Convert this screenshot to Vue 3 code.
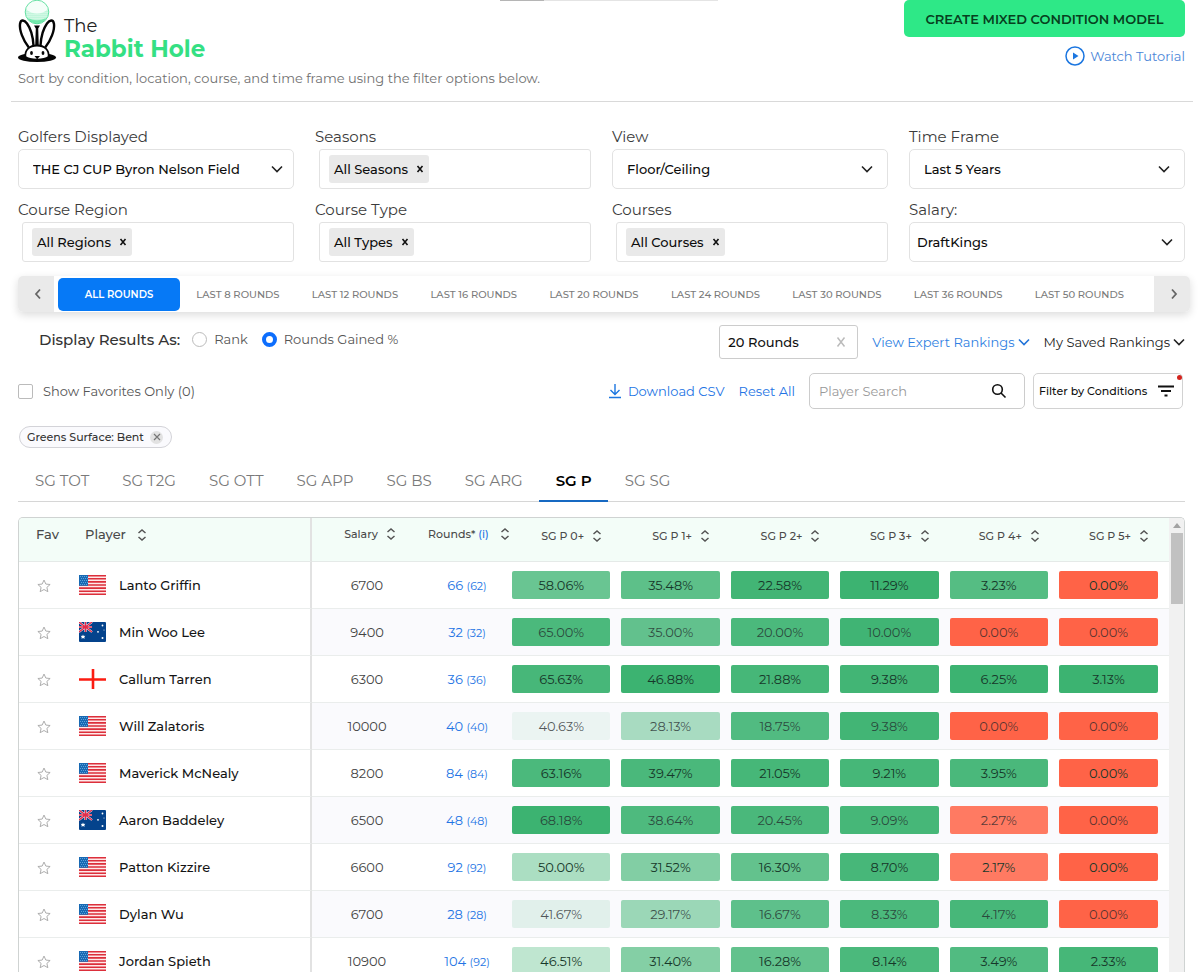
<script setup>
import { ref } from 'vue'

const roundTabs = ['All Rounds', 'Last 8 Rounds', 'Last 12 Rounds', 'Last 16 Rounds', 'Last 20 Rounds', 'Last 24 Rounds', 'Last 30 Rounds', 'Last 36 Rounds', 'Last 50 Rounds']
const statTabs = ['SG TOT', 'SG T2G', 'SG OTT', 'SG APP', 'SG BS', 'SG ARG', 'SG P', 'SG SG']
const activeRound = ref('All Rounds')
const activeStat = ref('SG P')
const displayAs = ref('gained')
const favoritesOnly = ref(false)
const search = ref('')

const filters = [
  { id: 'golfers', label: 'Golfers Displayed', type: 'select', value: 'THE CJ CUP Byron Nelson Field', tight: true },
  { id: 'seasons', label: 'Seasons', type: 'tags', value: 'All Seasons' },
  { id: 'view', label: 'View', type: 'select', value: 'Floor/Ceiling' },
  { id: 'time', label: 'Time Frame', type: 'select', value: 'Last 5 Years' },
  { id: 'region', label: 'Course Region', type: 'tags', value: 'All Regions' },
  { id: 'type', label: 'Course Type', type: 'tags', value: 'All Types' },
  { id: 'courses', label: 'Courses', type: 'tags', value: 'All Courses' },
  { id: 'salary', label: 'Salary:', type: 'select', value: 'DraftKings', snug: true },
]

const statColumns = ['SG P 0+', 'SG P 1+', 'SG P 2+', 'SG P 3+', 'SG P 4+', 'SG P 5+']

const g = (value, strength) => ({ value, color: `rgba(60, 179, 113, ${strength})` })
const r = (value, strength = 1) => ({ value, color: `rgba(255, 99, 71, ${strength})` })

const players = [
  { name: 'Lanto Griffin', flag: 'us', salary: 6700, rounds: 66, counted: 62, stats: [g('58.06', 0.77), g('35.48', 0.83), g('22.58', 0.97), g('11.29', 1), g('3.23', 0.87), r('0.00')] },
  { name: 'Min Woo Lee', flag: 'au', salary: 9400, rounds: 32, counted: 32, stats: [g('65.00', 0.92), g('35.00', 0.8), g('20.00', 0.92), g('10.00', 0.98), r('0.00'), r('0.00')] },
  { name: 'Callum Tarren', flag: 'en', salary: 6300, rounds: 36, counted: 36, stats: [g('65.63', 0.94), g('46.88', 1), g('21.88', 0.95), g('9.38', 0.97), g('6.25', 1), g('3.13', 1)] },
  { name: 'Will Zalatoris', flag: 'us', salary: 10000, rounds: 40, counted: 40, stats: [g('40.63', 0.08), g('28.13', 0.43), g('18.75', 0.89), g('9.38', 0.97), r('0.00'), r('0.00')] },
  { name: 'Maverick McNealy', flag: 'us', salary: 8200, rounds: 84, counted: 84, stats: [g('63.16', 0.92), g('39.47', 0.93), g('21.05', 0.95), g('9.21', 0.95), g('3.95', 0.93), r('0.00')] },
  { name: 'Aaron Baddeley', flag: 'au', salary: 6500, rounds: 48, counted: 48, stats: [g('68.18', 1), g('38.64', 0.91), g('20.45', 0.93), g('9.09', 0.95), r('2.27', 0.85), r('0.00')] },
  { name: 'Patton Kizzire', flag: 'us', salary: 6600, rounds: 92, counted: 92, stats: [g('50.00', 0.43), g('31.52', 0.64), g('16.30', 0.8), g('8.70', 0.94), r('2.17', 0.85), r('0.00')] },
  { name: 'Dylan Wu', flag: 'us', salary: 6700, rounds: 28, counted: 28, stats: [g('41.67', 0.13), g('29.17', 0.5), g('16.67', 0.82), g('8.33', 0.92), g('4.17', 0.94), r('0.00')] },
  { name: 'Jordan Spieth', flag: 'us', salary: 10900, rounds: 104, counted: 92, stats: [g('46.51', 0.33), g('31.40', 0.63), g('16.28', 0.8), g('8.14', 0.92), g('3.49', 0.89), g('2.33', 0.95)] },
]
</script>

<template>
  <div class="page">
    <div class="top-progress"><span></span></div>
    <header class="header">
      <div>
        <div class="brand">
          <svg class="logo" viewBox="0 0 40 64" width="40" height="64" aria-hidden="true">
            <defs>
              <pattern id="dimples" width="2" height="2" patternUnits="userSpaceOnUse">
                <circle cx="1" cy="1" r="0.6" fill="#2fdc84" />
              </pattern>
            </defs>
            <circle cx="19" cy="12" r="11.800" fill="#f4fef9" stroke="#58dc9b" stroke-width="0.900" />
            <path d="M8 9C14 15 24 15 30 9C32 17 27 24 19 24C11 24 6 17 8 9Z" fill="url(#dimples)" />
            <path d="M10 18C16 21 22 21 28 18C25 25 13 25 10 18Z" fill="#2fdc84" opacity="0.55" />
            <ellipse cx="19" cy="57.500" rx="19" ry="4.500" fill="#050505" />
            <path d="M16 25.500H22L20.200 28.500L20.800 46H17.200L17.800 28.500Z" fill="#050505" />
            <path d="M10.500 47C5 40 1.200 30 2 24C2.800 19 6.500 20 9 23.500C13 29 15 37 15.500 45.500M27.500 47C33 40 36.800 30 36 24C35.200 19 31.500 20 29 23.500C25 29 23 37 22.500 45.500" fill="none" stroke="#050505" stroke-width="2.400" stroke-linecap="round" />
            <path d="M7.500 57C6.500 50 11.500 45.500 19 45.500C26.500 45.500 31.500 50 30.500 57C26 60.500 12 60.500 7.500 57Z" fill="#fff" stroke="#050505" stroke-width="1.800" />
            <g fill="#050505">
              <ellipse cx="13.500" cy="53" rx="1.400" ry="2" /><ellipse cx="25" cy="53" rx="1.400" ry="2" />
              <path d="M16.500 56H22L19.800 58.500V60H18.500V58.500Z" />
            </g>
          </svg>
          <h1>The<strong>Rabbit Hole</strong></h1>
        </div>
        <p class="intro">Sort by condition, location, course, and time frame using the filter options below.</p>
      </div>
      <div class="header-actions">
        <button class="primary">CREATE MIXED CONDITION MODEL</button>
        <a class="tutorial" href="#tutorial">
          <svg viewBox="0 0 20 20" width="20" height="20" aria-hidden="true"><circle cx="10" cy="10" r="9" fill="none" stroke="#1b76e0" stroke-width="1.500" /><path d="M8 6.500L13.500 10L8 13.500Z" fill="#1b76e0" /></svg>
          Watch Tutorial
        </a>
      </div>
    </header>

    <section class="filters">
      <div v-for="f in filters" :key="f.id" class="field">
        <label :for="f.id">{{ f.label }}</label>
        <div v-if="f.type === 'select'" class="select-box" :class="{ snug: f.snug, tight: f.tight }">
          <select :id="f.id"><option>{{ f.value }}</option></select>
          <svg viewBox="0 0 12 8" width="12" height="8" aria-hidden="true"><path d="M1 1.500L6 6.500L11 1.500" /></svg>
        </div>
        <div v-else class="tag-box">
          <span class="tag">{{ f.value }}<button :aria-label="`Remove ${f.value}`"><svg viewBox="0 0 8 8" width="8" height="8"><path d="M1.500 1L6.500 7M6.500 1L1.500 7" /></svg></button></span>
          <input :id="f.id" type="text" />
        </div>
      </div>
    </section>

    <nav class="rounds" aria-label="Rounds">
      <button class="arrow" aria-label="Previous"><svg viewBox="0 0 8 12" width="8" height="12"><path d="M6 1.500L2 6L6 10.500" /></svg></button>
      <div class="round-list">
        <button v-for="t in roundTabs" :key="t" class="round" :class="{ active: t === activeRound }" @click="activeRound = t">{{ t.toUpperCase() }}</button>
      </div>
      <button class="arrow next" aria-label="Next"><svg viewBox="0 0 8 12" width="8" height="12"><path d="M2 1.500L6 6L2 10.500" /></svg></button>
    </nav>

    <div class="options">
      <div class="display-as">
        <span class="display-title">Display Results As:</span>
        <label><input v-model="displayAs" type="radio" name="display" value="rank" />Rank</label>
        <label><input v-model="displayAs" type="radio" name="display" value="gained" />Rounds Gained %</label>
      </div>
      <div class="option-right">
        <div class="clearable">
          <input type="text" value="20 Rounds" aria-label="Minimum rounds" />
          <button aria-label="Clear"><svg viewBox="0 0 10 10" width="10" height="10"><path d="M1.500 0.500L8.500 9.500M8.500 0.500L1.500 9.500" /></svg></button>
        </div>
        <button class="menu expert">View Expert Rankings<svg viewBox="0 0 12 8" width="12" height="8"><path d="M1 1.500L6 6.500L11 1.500" /></svg></button>
        <button class="menu">My Saved Rankings<svg viewBox="0 0 12 8" width="12" height="8"><path d="M1 1.500L6 6.500L11 1.500" /></svg></button>
      </div>
    </div>

    <div class="tools">
      <label class="favorites"><input v-model="favoritesOnly" type="checkbox" />Show Favorites Only (0)</label>
      <div class="tool-right">
        <a href="#csv" class="csv"><svg viewBox="0 0 12 16" width="12" height="16"><path d="M6 1V11M1.500 7L6 11.500L10.500 7M0 14.500H12" /></svg>Download CSV</a>
        <a href="#reset" class="reset">Reset All</a>
        <div class="search">
          <input v-model="search" type="text" placeholder="Player Search" aria-label="Player Search" />
          <button aria-label="Search"><svg viewBox="0 0 16 16" width="16" height="16"><circle cx="6.500" cy="6.500" r="4.800" /><path d="M10 10L14.500 14.500" /></svg></button>
        </div>
        <button class="conditions">Filter by Conditions<svg viewBox="0 0 16 12" width="16" height="12"><path d="M0 1.500H16M3 6H13M6.500 10.500H9.500" /></svg><span class="dot"></span></button>
      </div>
    </div>

    <div class="chips">
      <span class="chip">Greens Surface: Bent<button aria-label="Remove Greens Surface: Bent"><svg viewBox="0 0 8 8" width="8" height="8"><path d="M1 1L7 7M7 1L1 7" /></svg></button></span>
    </div>

    <nav class="stats" aria-label="Statistics">
      <button v-for="t in statTabs" :key="t" :class="{ active: t === activeStat }" @click="activeStat = t">{{ t }}</button>
    </nav>

    <section class="grid">
      <div class="table-wrap">
        <table>
          <colgroup>
            <col class="c-fav" /><col class="c-player" /><col class="c-salary" /><col class="c-rounds" />
            <col v-for="n in 5" :key="n" /><col class="c-last" />
          </colgroup>
          <thead>
            <tr>
              <th class="h-fav">Fav</th>
              <th class="h-player">Player<svg class="sort" viewBox="0 0 10 12" width="10" height="12"><path d="M1.500 4L5 1L8.500 4M1.500 8L5 11L8.500 8" /></svg></th>
              <th class="small">Salary<svg class="sort near" viewBox="0 0 10 12" width="10" height="12"><path d="M1.500 4L5 1L8.500 4M1.500 8L5 11L8.500 8" /></svg></th>
              <th class="small">Rounds* <a href="#rounds">(i)</a><svg class="sort" viewBox="0 0 10 12" width="10" height="12"><path d="M1.500 4L5 1L8.500 4M1.500 8L5 11L8.500 8" /></svg></th>
              <th v-for="c in statColumns" :key="c" class="stat-head">{{ c }}<svg class="sort near" viewBox="0 0 10 12" width="10" height="12"><path d="M1.500 4L5 1L8.500 4M1.500 8L5 11L8.500 8" /></svg></th>
            </tr>
          </thead>
          <tbody>
            <tr v-for="p in players" :key="p.name">
              <td class="fav"><button :aria-label="`Favorite ${p.name}`"><svg viewBox="0 0 16 16" width="14" height="14"><path d="M8 1.200L10.100 5.800L15 6.300L11.300 9.600L12.400 14.500L8 12L3.600 14.500L4.700 9.600L1 6.300L5.900 5.800Z" /></svg></button></td>
              <td class="player">
                <div>
                  <svg v-if="p.flag === 'us'" class="flag" viewBox="0 0 27 20" width="27" height="20" aria-label="United States">
                    <rect width="27" height="20" rx="1" fill="#ffe9e9" />
                    <path d="M0 .8H27M0 3.800H27M0 6.900H27M0 10H27M0 13.100H27M0 16.200H27M0 19.200H27" stroke="#dc2f3b" stroke-width="1.600" />
                    <rect width="9" height="10.800" fill="#1769b3" />
                    <path d="M1 1.500H9M2 3.500H9M1 5.500H9M2 7.500H9M1 9.500H9" stroke="#6fb0e4" stroke-width="0.800" stroke-dasharray="1 1" />
                  </svg>
                  <svg v-else-if="p.flag === 'au'" class="flag" viewBox="0 0 27 20" width="27" height="20" aria-label="Australia">
                    <rect width="27" height="20" rx="1" fill="#04438c" />
                    <path d="M0 0L13 10M13 0L0 10M6.500 0V10M0 5H13" stroke="#fff" stroke-width="2.200" />
                    <path d="M0 0L13 10M13 0L0 10M6.500 0V10M0 5H13" stroke="#e02d4b" stroke-width="1.400" />
                    <g fill="#fff"><path d="M4 12.500L4.700 14L6.300 13.800L5.300 15.200L5.700 16.800L4 16L2.500 16.800L2.700 15.200L1.700 13.800L3.300 14Z" /><circle cx="23.500" cy="3.500" r="0.900" /><circle cx="19" cy="9.800" r="0.900" /><circle cx="25" cy="8" r="0.500" /><circle cx="23.500" cy="16" r="1" /></g>
                  </svg>
                  <svg v-else class="flag" viewBox="0 0 27 20" width="27" height="20" aria-label="England"><rect width="27" height="20" fill="#fff" /><path d="M14 0V20M0 10.500H27" stroke="#fb1c12" stroke-width="2.600" /></svg>
                  {{ p.name }}
                </div>
              </td>
              <td class="num">{{ p.salary }}</td>
              <td class="num count"><a href="#player">{{ p.rounds }} <small>({{ p.counted }})</small></a></td>
              <td v-for="(s, i) in p.stats" :key="i" class="stat"><div class="pill" :style="{ background: s.color }">{{ s.value }}%</div></td>
            </tr>
          </tbody>
        </table>
      </div>
      <div class="scrollbar" aria-hidden="true"><svg viewBox="0 0 8 5" width="8" height="5"><path d="M0 5L4 0L8 5Z" fill="#a3a3a3" /></svg><span></span></div>
    </section>
  </div>
</template>

<style>
body { margin: 0; background: #fff; }
</style>

<style scoped>
* { box-sizing: border-box; }
.page {
  height: 100vh;
  overflow: hidden;
  display: flex;
  flex-direction: column;
  padding: 0 15px 0 18px;
  font-family: Montserrat, Inter, "Liberation Sans", sans-serif;
  font-size: 13px;
  color: #333;
}
button, input, select { font-family: inherit; color: inherit; }
button { border: 0; padding: 0; background: none; cursor: pointer; }
a { color: #2374e4; text-decoration: none; }
svg { flex: none; fill: none; stroke: none; }
.top-progress { position: absolute; top: 0; left: 500px; width: 218px; height: 1px; background: #e4e4e4; }
.top-progress span { display: block; width: 20%; height: 1px; background: #b5b5b5; }

.header { display: flex; justify-content: space-between; height: 102px; margin: 0 -8px 0 -7px; padding: 0 8px 0 7px; border-bottom: 1px solid #d9d9d9; flex: none; }
.brand { display: flex; gap: 6px; height: 64px; }
h1 { margin: 0; padding-top: 15px; font-size: 18px; line-height: 23px; font-weight: 400; color: #222; }
h1 strong { display: block; font-size: 23px; font-weight: 700; color: #34e083; }
.intro { margin: 4px 0 0; font-size: 13px; line-height: 20px; color: #707070; }
.header-actions { display: flex; flex-direction: column; align-items: flex-end; gap: 9px; }
.primary { width: 281px; height: 37px; border-radius: 5px; background: #2ee887; font-size: 13px; font-weight: 600; color: #07401e; }
.tutorial { display: flex; align-items: center; gap: 5px; font-size: 13px; line-height: 20px; color: #4a86d8; }

.filters { display: grid; grid-template-columns: repeat(4, minmax(0, 1fr)); gap: 11px 21px; padding-top: 25px; flex: none; }
.field > label { display: block; height: 22px; font-size: 15px; line-height: 20px; color: #3b3b3b; }
.select-box, .tag-box { display: flex; align-items: center; height: 40px; border: 1px solid #e2e2e2; border-radius: 5px; }
.select-box { position: relative; }
.select-box select { flex: 1; width: 100%; height: 100%; padding: 0 14px; border: 0; background: none; appearance: none; font-size: 13px; font-weight: 500; color: #0c0c0c; }
.select-box svg { position: absolute; right: 14px; stroke: #222; stroke-width: 1.6; pointer-events: none; }
.select-box.tight svg { right: 10px; }
.select-box.snug select { padding: 0 7px; }
.select-box.snug svg { right: 11px; }
.tag-box { margin-left: 4px; padding: 0 9px; border-radius: 3px; }
.tag-box input { flex: 1; min-width: 0; border: 0; outline: 0; background: none; }
.tag { display: flex; align-items: center; gap: 8px; height: 28px; padding: 0 5px; border-radius: 3px; background: #e9e9e9; font-size: 13px; font-weight: 500; color: #0c0c0c; }
.tag button { display: flex; }
.tag svg { stroke: #111; stroke-width: 1.6; }

.rounds { display: flex; height: 36px; margin: 14px -5px 0 0; border-radius: 5px; box-shadow: 0 3px 8px rgba(0, 0, 0, 0.14); flex: none; }
.arrow { width: 36px; padding-left: 4px; border-radius: 5px 0 0 5px; background: #eaeaea; display: flex; align-items: center; justify-content: center; }
.arrow.next { border-radius: 0 5px 5px 0; }
.arrow svg { stroke: #666; stroke-width: 1.8; }
.round-list { flex: 1; display: flex; align-items: center; justify-content: space-between; padding: 0 30px 0 4px; }
.round { height: 33px; font-size: 10px; font-weight: 500; color: #7a7a7a; }
.round.active { width: 122px; margin-right: -16px; border-radius: 5px; background: #0679f6; color: #fff; font-weight: 600; }

.options { display: flex; justify-content: space-between; align-items: center; height: 34px; margin-top: 13px; padding-left: 21px; flex: none; }
.display-as { display: flex; align-items: center; height: 28px; margin-bottom: 6px; }
.display-title { margin-right: 12px; font-size: 15px; font-weight: 500; }
.display-as label { display: flex; align-items: center; gap: 7px; margin-right: 14px; color: #555; }
.display-as input { appearance: none; width: 15px; height: 15px; margin: 0; border: 1px solid #bbb; border-radius: 50%; }
.display-as input:checked { border: 4px solid #0d6efd; }
.option-right { display: flex; align-items: center; gap: 14px; }
.clearable { display: flex; align-items: center; width: 139px; height: 34px; padding: 0 11px 0 8px; border: 1px solid #ccc; border-radius: 3px; }
.clearable input { flex: 1; min-width: 0; padding: 0; border: 0; font-size: 13px; font-weight: 500; color: #111; }
.clearable svg { stroke: #bbb; stroke-width: 1.5; display: block; }
.menu { display: flex; align-items: center; gap: 3px; font-size: 13px; color: #222; }
.menu svg { stroke: #222; stroke-width: 1.6; }
.menu.expert { color: #2f7fe2; }
.menu.expert svg { stroke: #2374d9; }

.tools { display: flex; justify-content: space-between; align-items: center; height: 36px; margin-top: 14px; padding-right: 2px; flex: none; }
.favorites { display: flex; align-items: center; gap: 10px; color: #555; }
.favorites input { appearance: none; width: 15px; height: 15px; margin: 0; border: 1px solid #bbb; border-radius: 2px; }
.tool-right { display: flex; align-items: center; }
.csv { display: flex; align-items: center; gap: 7px; }
.csv svg { stroke: #1b76e0; stroke-width: 1.4; }
.reset { margin: 0 14px; }
.search { display: flex; align-items: center; width: 216px; height: 36px; padding: 0 17px 0 9px; border: 1px solid #ccc; border-radius: 5px; }
.search input { flex: 1; min-width: 0; padding: 0; border: 0; outline: 0; font-size: 13px; }
.search input::placeholder { color: #999; opacity: 1; }
.search svg { display: block; stroke: #111; stroke-width: 1.6; }
.conditions { position: relative; display: flex; align-items: center; justify-content: space-between; width: 150px; height: 36px; margin-left: 8px; padding: 0 8px 0 5px; border: 1px solid #d2d2d2; border-radius: 5px; font-size: 11px; font-weight: 500; color: #111; }
.conditions svg { stroke: #111; stroke-width: 1.8; }
.dot { position: absolute; top: 1px; right: 0; width: 5px; height: 5px; border-radius: 50%; background: #d3241e; }

.chips { display: flex; margin: 17px 0 0 1px; flex: none; }
.chip { display: flex; align-items: center; justify-content: space-between; width: 153px; height: 22px; padding: 0 8px 0 7px; border: 1px solid #d3d3d8; border-radius: 11px; background: #fafafd; font-size: 11px; font-weight: 500; }
.chip button { display: flex; align-items: center; justify-content: center; width: 13px; height: 13px; border-radius: 50%; background: #e2e2e2; }
.chip svg { stroke: #777; stroke-width: 1.2; }

.stats { display: flex; height: 42px; margin-top: 12px; border-bottom: 1px solid #d6d6d6; flex: none; }
.stats button { height: 42px; padding: 0 16px 0 17px; border-bottom: 2px solid transparent; font-size: 15px; color: #7a7a7a; }
.stats button.active { border-bottom-color: #1769c2; font-weight: 600; color: #000; }

.grid { display: flex; flex: 1; min-height: 0; margin-top: 15px; border: 1px solid #cfd3d2; border-bottom: 0; border-radius: 5px 5px 0 0; overflow: hidden; }
.table-wrap { flex: 1; min-width: 0; overflow: hidden; }
table { width: 100%; table-layout: fixed; border-collapse: separate; border-spacing: 0; }
.c-fav { width: 50px; }
.c-player { width: 243px; }
.c-salary { width: 110px; }
.c-rounds { width: 85px; }
.c-last { width: 115px; }
th { height: 44px; padding: 0; vertical-align: top; line-height: 32px; border-bottom: 1px solid #e5eae8; background: #f3fdf8; font-weight: 500; font-size: 13px; color: #4a4a4a; white-space: nowrap; }
.h-fav { text-align: left; padding-left: 17px; }
.h-player { text-align: left; padding-left: 16px; }
.small { padding-left: 6px; font-size: 11px; }
.stat-head { padding-top: 2px; padding-left: 20px; font-size: 11px; }
.stat-head:last-child { padding-right: 5px; }
.sort { margin-left: 11px; vertical-align: -2px; stroke: #555; stroke-width: 1.5; }
.sort.near { margin-left: 8px; }
td { height: 47px; padding: 0; border-bottom: 1px solid #eaedec; }
th:nth-child(2), td:nth-child(2) { border-right: 2px solid #e2e2e2; }
.fav button { display: flex; margin: 2px 0 0 18px; }
.fav svg { stroke: #aaa; stroke-width: 1.1; }
.player div { display: flex; align-items: center; gap: 13px; padding-left: 10px; font-size: 13px; font-weight: 500; color: #141414; }
.num { text-align: center; font-size: 13px; color: #444; }
.num small { font-size: 11px; }
.count { padding-left: 5px; }
tbody tr:nth-child(even) td:nth-child(n+3) { background: #fafafd; }
.stat { padding: 0 6px 0 5px; }
.stat:last-child { padding-right: 11px; }
.pill { height: 28px; border-radius: 2px; line-height: 28px; text-align: center; font-size: 13px; color: #17382a; }
tbody tr:nth-child(even) .pill { color: rgba(33, 37, 41, 0.75); }
.scrollbar { width: 15px; padding-top: 5px; display: flex; flex-direction: column; align-items: center; gap: 5px; background: #f1f1f1; }
.scrollbar span { width: 12px; height: 71px; background: #c1c1c1; }
</style>
